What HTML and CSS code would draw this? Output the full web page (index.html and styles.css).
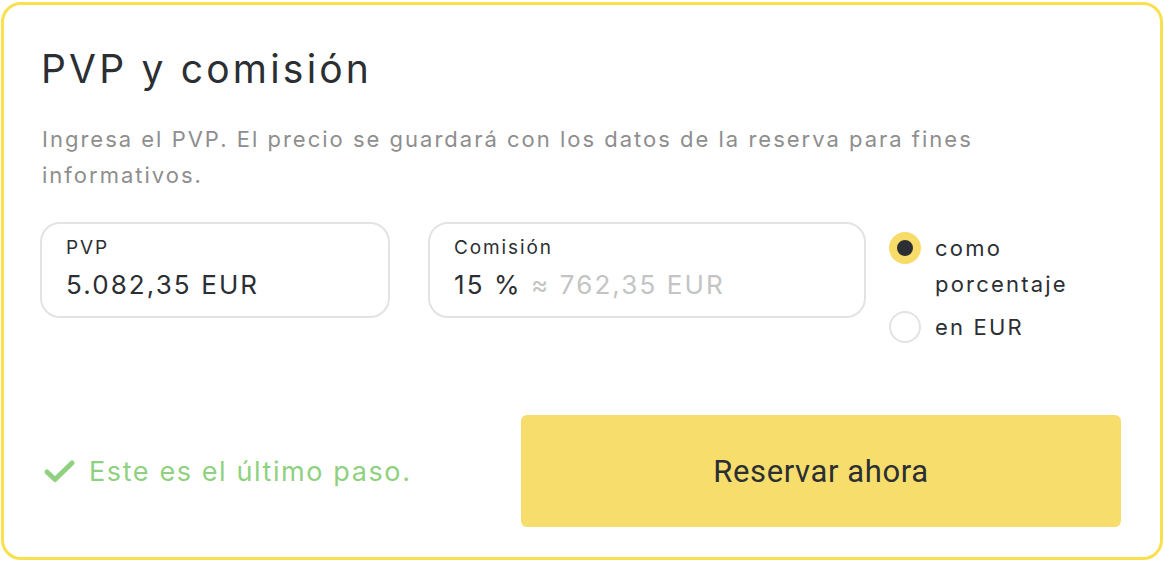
FILE: index.html
```html
<!DOCTYPE html>
<html lang="es">
<head>
<meta charset="utf-8">
<title>PVP y comisión</title>
<link rel="stylesheet" href="styles.css">
</head>
<body>
<section class="card">
  <h1 class="title">PVP y comisión</h1>
  <p class="desc">Ingresa el PVP. El precio se guardará con los datos de la reserva para fines informativos.</p>
  <div class="fields">
    <div class="field field-pvp">
      <div class="label">PVP</div>
      <div class="value">5.082,35 EUR</div>
    </div>
    <div class="field field-com">
      <div class="label">Comisión</div>
      <div class="value">15 % <span class="approx">≈ 762,35 EUR</span></div>
    </div>
    <div class="radios">
      <div class="radio checked"><span class="dot"></span><span class="rtext">como porcentaje</span></div>
      <div class="radio"><span class="dot"></span><span class="rtext">en EUR</span></div>
    </div>
  </div>
  <div class="footer">
    <div class="note">
      <svg class="check" width="34" height="26" viewBox="0 0 34 26"><path d="M5 14 L13 21.5 L30 5" fill="none" stroke="#8fd17f" stroke-width="5" stroke-linecap="round" stroke-linejoin="round"/></svg>
      <span>Este es el último paso.</span>
    </div>
    <button class="cta">Reservar ahora</button>
  </div>
</section>
</body>
</html>
```
FILE: styles.css
```css
html, body {
  margin: 0;
  padding: 0;
  background: #ffffff;
}
body {
  font-family: Inter, "Noto Sans", sans-serif;
  color: #2b2f33;
}
.card {
  box-sizing: border-box;
  width: 1162px;
  height: 558px;
  margin: 2px 1px;
  border: 3px solid #f8e04f;
  border-radius: 20px;
  padding: 40px 39px 30px 36px;
  display: flex;
  flex-direction: column;
}
.title {
  margin: 0 0 0 1px;
  font-size: 39px;
  line-height: 48px;
  font-weight: 400;
  color: #2b2f33;
  letter-spacing: 3.2px;
}
.desc {
  margin: 28px 0 0 2px;
  font-size: 22px;
  line-height: 36px;
  color: #8e8e8e;
  letter-spacing: 2px;
  max-width: 1000px;
}
.fields {
  display: flex;
  align-items: flex-start;
  margin-top: 29px;
}
.field {
  box-sizing: border-box;
  height: 96px;
  border: 2px solid #e3e3e3;
  border-radius: 20px;
  padding: 12px 24px 0;
}
.field-pvp {
  width: 350px;
}
.field-com {
  width: 438px;
  margin-left: 38px;
}
.label {
  font-size: 19px;
  line-height: 24px;
  color: #2b2f33;
  letter-spacing: 1.9px;
}
.value {
  margin-top: 9px;
  font-size: 26px;
  line-height: 32px;
  color: #2b2f33;
  letter-spacing: 2.1px;
}
.approx {
  color: #c4c4c4;
}
.radios {
  margin-left: 23px;
  margin-top: 8px;
  display: flex;
  flex-direction: column;
  gap: 7px;
}
.radio {
  display: flex;
  align-items: flex-start;
  gap: 14px;
  font-size: 22px;
  line-height: 36px;
  color: #2b2f33;
  letter-spacing: 2.2px;
}
.rtext {
  width: 160px;
}
.dot {
  box-sizing: border-box;
  flex: none;
  width: 32px;
  height: 32px;
  margin-top: 2px;
  border-radius: 50%;
  border: 2px solid #e3e3e3;
  background: #ffffff;
}
.radio.checked .dot {
  border: 8px solid #f8dc6a;
  background: #2b2f33;
}
.footer {
  margin-top: auto;
  display: flex;
  align-items: center;
  justify-content: space-between;
}
.note {
  display: flex;
  align-items: center;
  gap: 13px;
  padding-left: 2px;
  font-size: 27px;
  letter-spacing: 1.6px;
  color: #8fd17f;
}
.check {
  flex: none;
}
.cta {
  width: 600px;
  height: 112px;
  border: none;
  border-radius: 6px;
  background: #f7dd6c;
  font-family: Roboto, "Noto Sans", sans-serif;
  font-size: 31px;
  letter-spacing: 0.6px;
  color: #2b2f33;
  cursor: pointer;
}
```
